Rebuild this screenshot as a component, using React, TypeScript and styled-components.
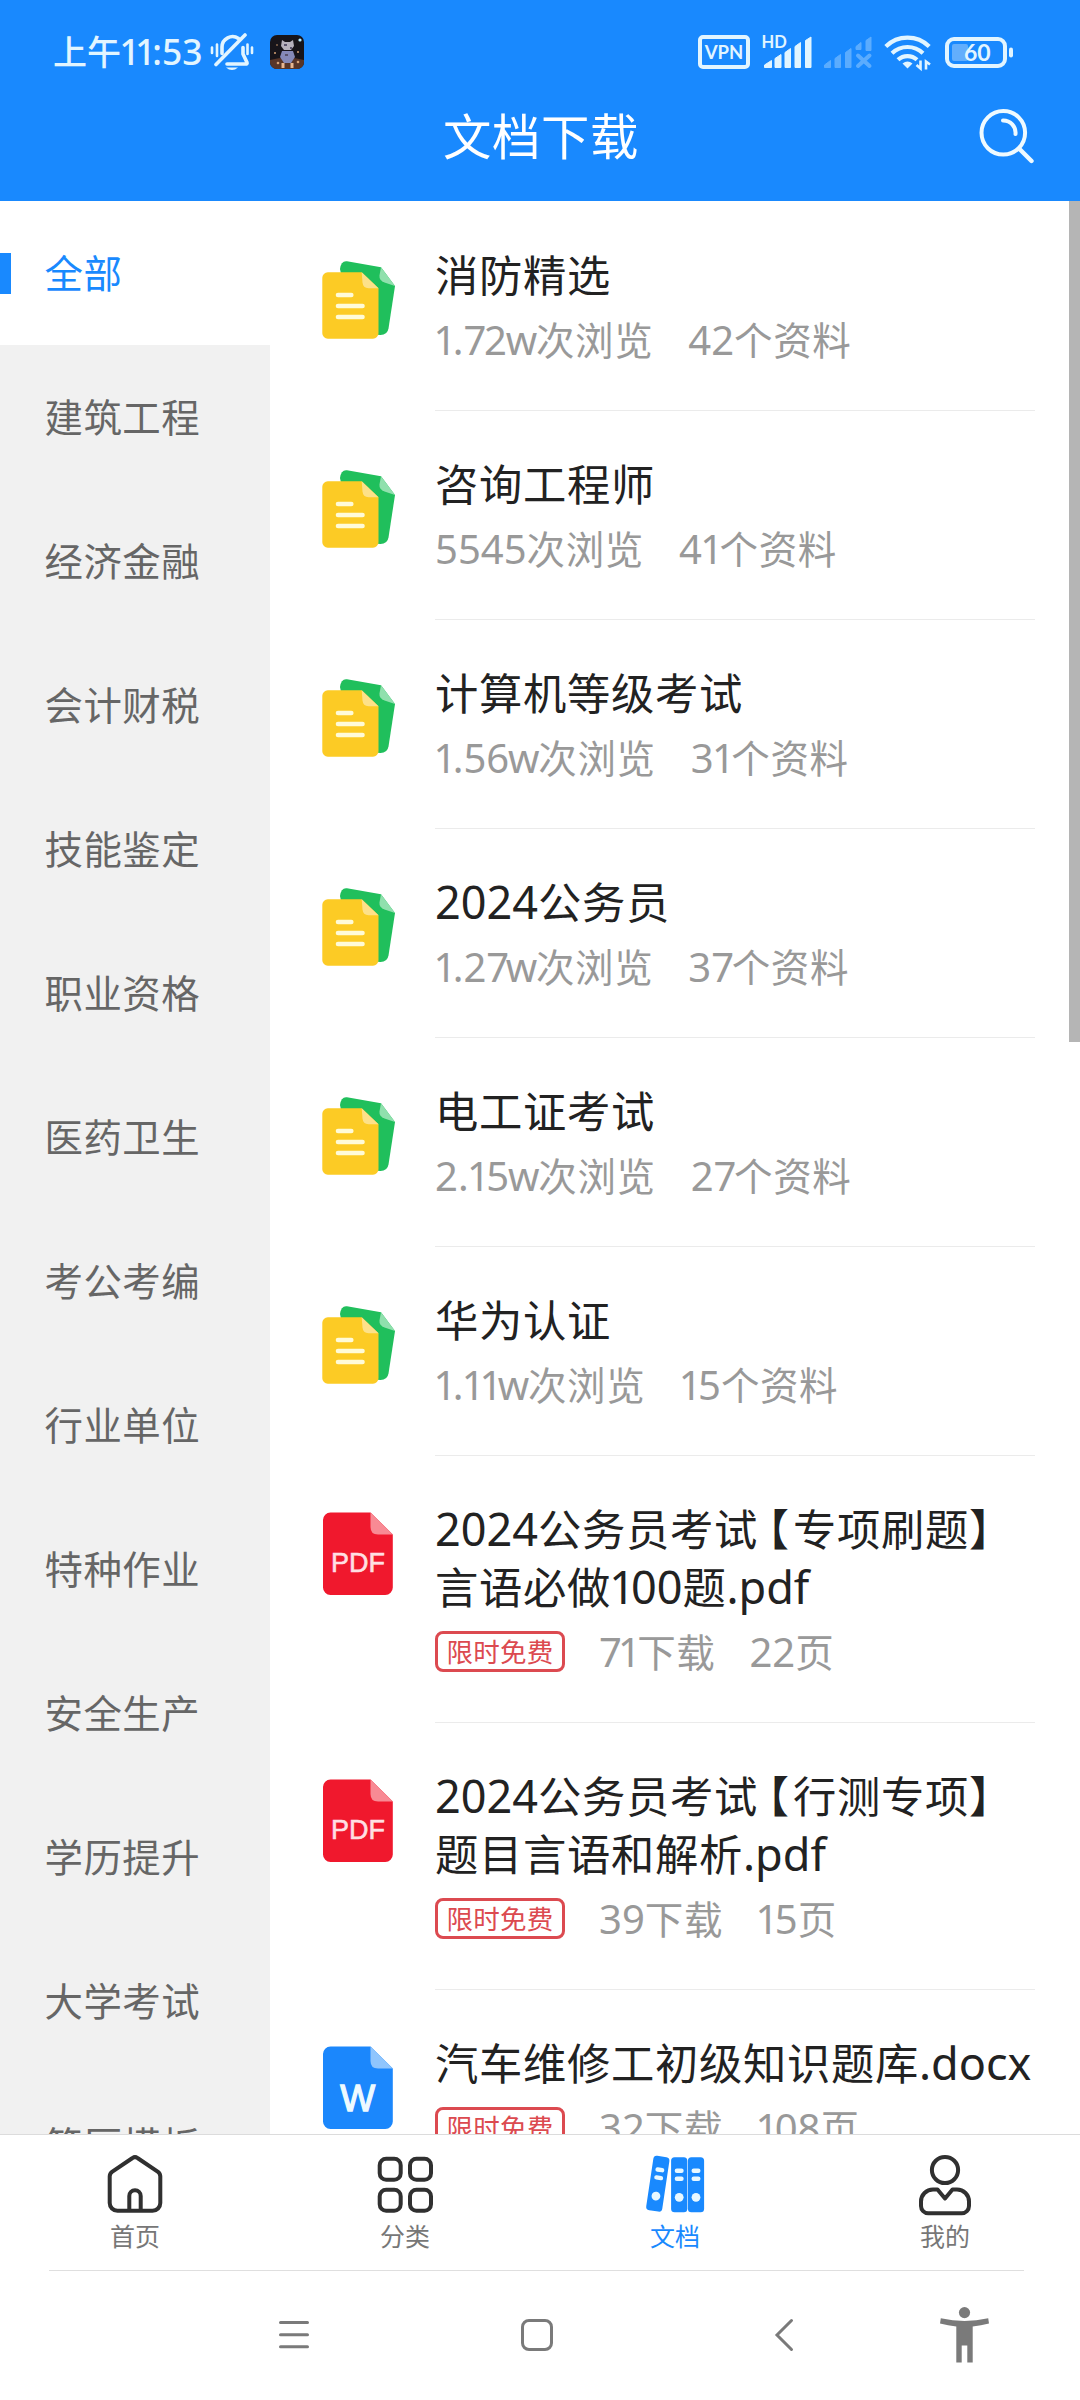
import React from 'react';
import styled, { createGlobalStyle, css } from 'styled-components';

const BLUE = '#1989fe';
const PALE = '#e2f5ff';

const GlobalStyle = createGlobalStyle`
  * { box-sizing: border-box; }
  body {
    margin: 0;
    background: #fff;
    font-family: 'Noto Sans', 'Noto Sans CJK SC', sans-serif;
  }
`;

const Screen = styled.div`
  width: 1080px;
  height: 2400px;
  display: flex;
  flex-direction: column;
  overflow: hidden;
  background: #fff;
`;

const Header = styled.header`
  height: 201px;
  flex: none;
  display: flex;
  flex-direction: column;
  background: ${BLUE};
  color: #fff;
`;

const StatusBar = styled.div`
  height: 70px;
  padding: 34px 65px 0 53px;
  display: flex;
  align-items: center;
  justify-content: space-between;
  color: ${PALE};
`;

const StatusGroup = styled.div`
  display: flex;
  align-items: center;
  height: 36px;
`;

const Clock = styled.span`
  width: 157px;
  font-size: 34px;
  font-weight: 500;
  line-height: 36px;
  white-space: nowrap;
  margin-top: -1px;
`;

const Avatar = styled.svg`
  margin-left: 16px;
`;

const VpnBadge = styled.span`
  width: 52px;
  height: 34px;
  border: 4px solid ${PALE};
  border-radius: 5px;
  display: flex;
  align-items: center;
  justify-content: center;
  font: 700 18.5px/26px Lato, sans-serif;
`;

const Signal = styled.svg<{ $gap: number; $dim?: boolean }>`
  overflow: visible;
  margin-left: ${(p) => p.$gap}px;
  ${(p) => p.$dim && css`opacity: 0.33;`}
`;

const TitleBar = styled.div`
  flex: 1;
  display: grid;
  grid-template-columns: 1fr auto 1fr;
  align-items: center;
  padding: 0 44px 0 46px;
`;

const PageTitle = styled.h1`
  margin: 0;
  grid-column: 2;
  font-size: 48.4px;
  letter-spacing: 0.6px;
  font-weight: 400;
  line-height: 60px;
`;

const SearchButton = styled.button`
  grid-column: 3;
  justify-self: end;
  width: 58px;
  height: 58px;
  padding: 0;
  border: 0;
  background: none;
  display: flex;
`;

const Main = styled.main`
  flex: 1;
  min-height: 0;
  display: flex;
  overflow: hidden;
`;

const Sidebar = styled.nav`
  width: 270px;
  flex: none;
  background: #f1f1f1;
  overflow: hidden;
`;

const Category = styled.div<{ $active?: boolean }>`
  height: 144px;
  display: flex;
  align-items: center;
  font-size: 38.4px;
  letter-spacing: 0.5px;
  line-height: 52px;
  color: ${(p) => (p.$active ? BLUE : '#666')};
  background: ${(p) => (p.$active ? '#fff' : 'transparent')};
  &::before {
    content: '';
    width: 11px;
    height: 41px;
    margin-right: 33.5px;
    background: ${(p) => (p.$active ? BLUE : 'transparent')};
  }
`;

const List = styled.section`
  flex: 1;
  padding: 1px 0 0 43px;
  overflow: hidden;
`;

const Row = styled.article<{ $tall?: boolean }>`
  height: ${(p) => (p.$tall ? 267 : 209)}px;
  display: flex;
  gap: 32px;
`;

const RowIcon = styled.svg`
  flex: none;
  margin-top: 53px;
`;

const RowBody = styled.div`
  width: 600px;
  padding-top: 45px;
  border-bottom: 1px solid #ebebeb;
`;

const RowTitle = styled.h2`
  margin: 0;
  font-size: 43.3px;
  letter-spacing: 0.7px;
  font-weight: 400;
  line-height: 58px;
  color: #222;
  white-space: nowrap;
`;

const Meta = styled.div<{ $gap: number }>`
  margin-top: 9px;
  display: flex;
  align-items: center;
  gap: ${(p) => p.$gap}px;
  font-size: 38.5px;
  letter-spacing: 0.6px;
  line-height: 52px;
  height: 52px;
  color: #999;
  white-space: nowrap;
`;

const FreeTag = styled.span`
  width: 130px;
  height: 41px;
  margin-top: -1px;
  border: 3px solid #dc4a50;
  border-radius: 8px;
  font-size: 26.5px;
  letter-spacing: 0.2px;
  line-height: 36px;
  text-align: center;
  color: #dc4a50;
`;

const Latin = styled.span<{ $l?: number; $r?: number }>`
  font-size: 1.04em;
  line-height: 1;
  letter-spacing: 0;
  margin-left: ${(p) => p.$l ?? 0}em;
  margin-right: ${(p) => p.$r ?? 0}em;
`;

const Bracket = styled.span<{ $l: number; $r: number }>`
  margin-left: ${(p) => p.$l}em;
  margin-right: ${(p) => p.$r}em;
  font-family: 'Noto Sans CJK SC', sans-serif;
  font-feature-settings: 'halt';
  line-height: 1;
`;

const ScrollTrack = styled.div`
  width: 11px;
  flex: none;
`;

const ScrollThumb = styled.div`
  height: 841px;
  background: #b5b5b5;
`;

const TabBar = styled.nav`
  height: 136px;
  flex: none;
  display: grid;
  grid-template-columns: repeat(4, 1fr);
  border-top: 1px solid #dcdcdc;
`;

const Tab = styled.div<{ $active?: boolean }>`
  display: flex;
  flex-direction: column;
  align-items: center;
  padding-top: 18px;
  font-size: 25px;
  line-height: 30px;
  color: ${(p) => (p.$active ? BLUE : '#777')};
`;

const TabLabel = styled.span`
  margin-top: 4px;
`;

const SystemNav = styled.footer`
  height: 130px;
  flex: none;
  margin: 0 56px 0 49px;
  padding: 0 0 2px 230px;
  border-top: 1px solid #dfdfdf;
  display: flex;
  align-items: center;
`;

const NavIcon = styled.svg<{ $gap?: number }>`
  flex: none;
  overflow: visible;
  margin-left: ${(p) => p.$gap ?? 0}px;
`;

const METRICS: Record<string, [number, number]> = {
  '1': [-0.04, -0.09],
  '7': [0, -0.06],
  w: [-0.03, -0.03],
  '【': [0.22, 0.075],
};

function Txt({ children }: { children: string }) {
  const parts = children.match(/1|7|w|【|[02-68-9a-vx-z.:]+|[^\x21-\x7e【]+/g) ?? [];
  return (
    <>
      {parts.map((part, i) => {
        const [l, r] = METRICS[part] ?? [0, 0];
        if (part === '【') {
          return <Bracket key={i} $l={l} $r={r}>{part}</Bracket>;
        }
        if (/^[\x21-\x7e]+$/.test(part)) {
          return <Latin key={i} $l={l} $r={r}>{part}</Latin>;
        }
        return <React.Fragment key={i}>{part}</React.Fragment>;
      })}
    </>
  );
}

const FolderIcon = () => (
  <RowIcon width="90" height="90" viewBox="0 0 90 90">
    <path d="M34 6.200 68 12.200 82 31 75.500 73.500Q74.300 80 67.500 80L40 78 27 14Q28 5.400 34 6.200Z" fill="#20bf5c" />
    <path d="M68 12.200 82 31 71.500 27.500Q66 25.500 66.500 20.500Z" fill="#90e0ad" />
    <path d="M14.800 17.300H48.700L65.500 33.300V78.200a5.500 5.500 0 0 1-5.500 5.500H14.800a5.500 5.500 0 0 1-5.500-5.500V22.800a5.500 5.500 0 0 1 5.500-5.500Z" fill="#fccb25" />
    <path d="M48.700 17.300 65.500 33.300H55.500Q50 33 49.500 27.500Z" fill="#fde189" />
    <path d="M25 40H38.300M25 51H49.500M25 62H49.500" stroke="#fffbd8" strokeWidth="4.600" strokeLinecap="round" />
  </RowIcon>
);

const FileIcon = ({ kind }: { kind: 'pdf' | 'doc' }) => {
  const pdf = kind === 'pdf';
  return (
    <RowIcon width="90" height="90" viewBox="0 0 90 90">
      <path
        d="M17.500 3.500H57.500L79.800 25.500V78.500a7.500 7.500 0 0 1-7.500 7.500H17.500a7.500 7.500 0 0 1-7.500-7.500V11a7.500 7.500 0 0 1 7.500-7.500Z"
        fill={pdf ? '#f0182d' : '#1b87fc'}
      />
      <path d="M57.500 3.500 79.800 25.500H65Q57.500 25.500 57.500 18Z" fill={pdf ? '#f88a94' : '#8fc5fd'} />
      {pdf ? (
        <text x="45" y="63.400" textAnchor="middle" fontFamily="Liberation Sans, Arial, sans-serif" fontSize="27" fill="#ffdfe2" stroke="#ffdfe2" strokeWidth="0.600">PDF</text>
      ) : (
        <text x="44.700" y="67.500" textAnchor="middle" fontFamily="Liberation Sans, Arial, sans-serif" fontSize="37" fill="#eefaff" stroke="#eefaff" strokeWidth="1.300">W</text>
      )}
    </RowIcon>
  );
};

const categories = [
  '全部', '建筑工程', '经济金融', '会计财税', '技能鉴定', '职业资格', '医药卫生',
  '考公考编', '行业单位', '特种作业', '安全生产', '学历提升', '大学考试', '简历模板',
];

const folders = [
  { title: '消防精选', views: '1.72w次浏览', count: '42个资料' },
  { title: '咨询工程师', views: '5545次浏览', count: '41个资料' },
  { title: '计算机等级考试', views: '1.56w次浏览', count: '31个资料' },
  { title: '2024公务员', views: '1.27w次浏览', count: '37个资料' },
  { title: '电工证考试', views: '2.15w次浏览', count: '27个资料' },
  { title: '华为认证', views: '1.11w次浏览', count: '15个资料' },
];

const files: { kind: 'pdf' | 'doc'; lines: string[]; downloads: string; pages: string }[] = [
  { kind: 'pdf', lines: ['2024公务员考试【专项刷题】', '言语必做100题.pdf'], downloads: '71下载', pages: '22页' },
  { kind: 'pdf', lines: ['2024公务员考试【行测专项】', '题目言语和解析.pdf'], downloads: '39下载', pages: '15页' },
  { kind: 'doc', lines: ['汽车维修工初级知识题库.docx'], downloads: '32下载', pages: '108页' },
];

const HomeIcon = () => (
  <svg width="60" height="64" viewBox="0 0 60 64" fill="none" stroke="#303030" strokeWidth="4">
    <path d="M27.500 5Q30 3.200 32.500 5L53 18.800Q55.300 20.500 55.300 23.500V50a7.800 7.800 0 0 1-7.800 7.800H12.500A7.800 7.800 0 0 1 4.700 50V23.500Q4.700 20.500 7 18.800Z" />
    <path d="M24.300 58V43a5.700 5.700 0 0 1 11.400 0V58" />
  </svg>
);

const GridIcon = () => (
  <svg width="60" height="64" viewBox="0 0 60 64" fill="none" stroke="#303030" strokeWidth="4">
    {[5.8, 36.7].map((y) =>
      [4.7, 35].map((x) => <rect key={`${x}-${y}`} x={x} y={y} width="21" height="21" rx="6.500" />),
    )}
  </svg>
);

const Binder = ({ transform }: { transform: string }) => (
  <g transform={transform}>
    <rect x="-8.100" y="-27.500" width="16.200" height="55" rx="3.500" fill={BLUE} />
    <path d="M-2.300-14H2.300M-2.300-6H2.300" stroke="#e8f8ff" strokeWidth="4.400" strokeLinecap="round" />
    <circle cy="12.500" r="4.400" fill="#e8f8ff" />
  </g>
);

const BindersIcon = () => (
  <svg width="60" height="64" viewBox="0 0 60 64" overflow="visible">
    <Binder transform="translate(12.800 30.700) rotate(8.500)" />
    <Binder transform="translate(34.200 31.800)" />
    <Binder transform="translate(51 31.800)" />
  </svg>
);

const UserIcon = () => (
  <svg width="60" height="64" viewBox="0 0 60 64" fill="none" stroke="#303030" strokeWidth="4">
    <circle cx="30" cy="17" r="13.100" />
    <path d="M22.500 36.500 30 45.500 37.500 36.500H42a12 12 0 0 1 12 12V53a7.200 7.200 0 0 1-7.200 7.200H13.200A7.200 7.200 0 0 1 6 53V48.500a12 12 0 0 1 12-12Z" strokeLinejoin="round" />
  </svg>
);

export default function App() {
  return (
    <Screen>
      <GlobalStyle />
      <Header>
        <StatusBar>
          <StatusGroup>
            <Clock><Txt>上午11:53</Txt></Clock>
            <svg width="44" height="38" viewBox="0 0 44 38" fill="none" stroke={PALE} strokeWidth="3.600" strokeLinecap="round">
              <path d="M12 20.500V14A10.500 10.500 0 0 1 28.500 5.500" />
              <path d="M33 14.500V21L37 29.500Q37.500 31 35.500 31H17" strokeLinejoin="round" />
              <path d="M35 2 6 31.500" />
              <path d="M2 14.500V20M7 11.500V23M37.500 11.500V21M42 14.500V20" strokeWidth="2.600" />
              <path d="M16 34.500H28Q22 39.500 16 34.500Z" fill={PALE} stroke="none" />
            </svg>
            <Avatar width="34" height="34" viewBox="0 0 34 34">
              <rect width="34" height="34" rx="7" fill="#17141a" />
              <path d="M0 25Q17 20 34 25V27A7 7 0 0 1 27 34H7A7 7 0 0 1 0 27Z" fill="#583528" />
              <path d="M12 5 15 7H20L23 5 24 11 21 15H14L11 11Z" fill="#b6b1bd" />
              <path d="M12 16H23L25 22 21 28H14L10 22Z" fill="#8589b8" />
              <path d="M13 28V33M22 28V33" stroke="#e7b690" strokeWidth="3" />
              <path d="M14 10H17M20 13H22M15 20H18" stroke="#59536d" strokeWidth="2" />
              <g fill="#d6a276"><circle cx="5" cy="18" r="1" /><circle cx="28" cy="17" r="1" /><circle cx="8" cy="28" r="1.300" /><circle cx="28" cy="27" r="1.300" /><circle cx="7" cy="10" r=".8" /></g>
              <circle cx="30" cy="5" r="1.600" fill="#b9efff" />
            </Avatar>
          </StatusGroup>
          <StatusGroup>
            <VpnBadge>VPN</VpnBadge>
            <Signal $gap={12} width="50" height="36" viewBox="0 0 50 36" fill={PALE}>
              <text x="-.5" y="14" fontFamily="Lato, sans-serif" fontWeight="700" fontSize="16.500">HD</text>
              <path d="M2.500 33.500V31L9.500 26.500V33.500ZM13 33.500V24.500L19 20.500V33.500ZM23 33.500V18.500L28.500 14.500V33.500ZM33 33.500V12.500L38.500 8.500V33.500ZM43.500 33.500V6.500L49 3V33.500Z" stroke={PALE} strokeLinejoin="round" />
            </Signal>
            <Signal $gap={12} $dim width="50" height="36" viewBox="0 0 50 36" fill={PALE}>
              <path d="M.5 33.500V31L6.500 26.500V33.500ZM11 33.500V24.500L16.500 20.500V33.500ZM21.500 33.500V18.500L27 14.500V33.500ZM32 15.500V12.500L37 8.500V15.500ZM42 16.500V6.500L47 3V16.500Z" stroke={PALE} strokeLinejoin="round" />
              <path d="M34 21.500 45.500 32M45.500 21.500 34 32" stroke={PALE} strokeWidth="4" strokeLinecap="round" />
            </Signal>
            <Signal $gap={10} width="48" height="36" viewBox="0 0 48 36" fill="none" stroke={PALE} strokeWidth="4.200">
              <path d="M1.800 12.500A31 31 0 0 1 45.200 12.500" />
              <path d="M8 19.200A22.500 22.500 0 0 1 39 19.200" />
              <path d="M14 25.800A14 14 0 0 1 33 25.800" />
              <path d="M18.500 29.500Q23.500 25.500 28.500 29.500L23.500 34.500Z" fill={PALE} stroke="none" />
              <path d="M36.500 26.500V34.500L32.500 31M42 35.500V27.500L46 30.500" strokeWidth="2.600" />
            </Signal>
            <Signal $gap={13} width="70" height="34" viewBox="0 0 70 34">
              <rect x="2" y="4" width="58" height="27" rx="7" fill="none" stroke={PALE} strokeWidth="4" />
              <rect x="7" y="9" width="16" height="17" rx="2" fill="#63aefc" />
              <rect x="64" y="12.500" width="4" height="10" rx="2" fill={PALE} />
              <text x="32.300" y="25.700" textAnchor="middle" fontFamily="Lato, sans-serif" fontWeight="700" fontSize="23" fill={PALE}>60</text>
            </Signal>
          </StatusGroup>
        </StatusBar>
        <TitleBar>
          <PageTitle>文档下载</PageTitle>
          <SearchButton aria-label="搜索">
            <svg width="58" height="58" viewBox="0 0 58 58" fill="none" stroke="#effaff" strokeWidth="4" strokeLinecap="round">
              <circle cx="25.300" cy="25.800" r="21.800" />
              <path d="M41 41.500 53.500 54" strokeWidth="4.400" />
              <path d="M25 13.500A12.300 12.300 0 0 1 37.500 27" />
            </svg>
          </SearchButton>
        </TitleBar>
      </Header>

      <Main>
        <Sidebar>
          {categories.map((name, i) => (
            <Category key={name} $active={i === 0}>{name}</Category>
          ))}
        </Sidebar>
        <List>
          {folders.map((f) => (
            <Row key={f.title}>
              <FolderIcon />
              <RowBody>
                <RowTitle><Txt>{f.title}</Txt></RowTitle>
                <Meta $gap={35}>
                  <span><Txt>{f.views}</Txt></span>
                  <span><Txt>{f.count}</Txt></span>
                </Meta>
              </RowBody>
            </Row>
          ))}
          {files.map((f) => (
            <Row key={f.lines[0]} $tall={f.lines.length > 1}>
              <FileIcon kind={f.kind} />
              <RowBody>
                {f.lines.map((line) => (
                  <RowTitle key={line}><Txt>{line}</Txt></RowTitle>
                ))}
                <Meta $gap={34}>
                  <FreeTag>限时免费</FreeTag>
                  <span><Txt>{f.downloads}</Txt></span>
                  <span><Txt>{f.pages}</Txt></span>
                </Meta>
              </RowBody>
            </Row>
          ))}
        </List>
        <ScrollTrack><ScrollThumb /></ScrollTrack>
      </Main>

      <TabBar>
        <Tab><HomeIcon /><TabLabel>首页</TabLabel></Tab>
        <Tab><GridIcon /><TabLabel>分类</TabLabel></Tab>
        <Tab $active><BindersIcon /><TabLabel>文档</TabLabel></Tab>
        <Tab><UserIcon /><TabLabel>我的</TabLabel></Tab>
      </TabBar>

      <SystemNav>
        <NavIcon width="30" height="30" viewBox="0 0 30 30" stroke="#7a7a7a" strokeWidth="3" strokeLinecap="round">
          <path d="M1.500 2.500H28.500M1.500 14.700H28.500M1.500 26.800H28.500" />
        </NavIcon>
        <NavIcon $gap={212} width="32" height="32" viewBox="0 0 32 32" fill="none" stroke="#7a7a7a" strokeWidth="3">
          <rect x="1.500" y="1.500" width="29" height="29" rx="6.500" />
        </NavIcon>
        <NavIcon $gap={222} width="18" height="32" viewBox="0 0 18 32" fill="none" stroke="#7a7a7a" strokeWidth="3" strokeLinecap="round">
          <path d="M16.500 1.500 2 16 16.500 30.500" />
        </NavIcon>
        <NavIcon $gap={147} width="49" height="56" viewBox="0 0 49 56" fill="#7a7a7a">
          <circle cx="24.500" cy="5.600" r="5.600" />
          <path d="M.8 11.300Q24.500 16.500 48.200 11.300L49 16.500Q41 18.700 32.700 19.500V55.500H27.300V38.500H21.700V55.500H16.300V19.500Q8 18.700 0 16.500Z" />
        </NavIcon>
      </SystemNav>
    </Screen>
  );
}
